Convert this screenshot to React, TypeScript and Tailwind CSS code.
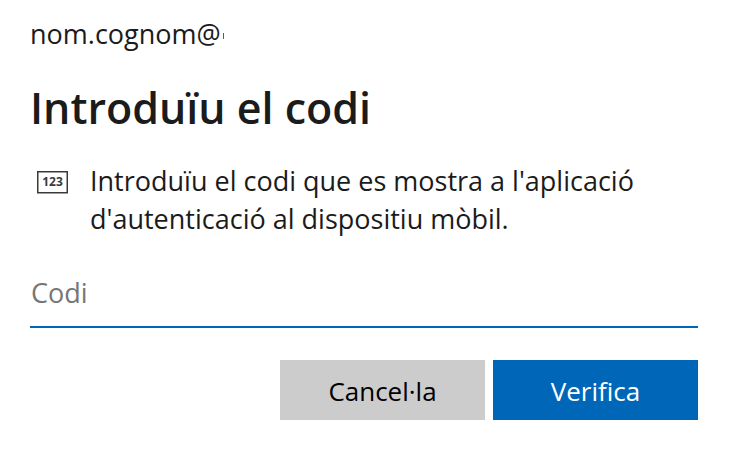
import { useState } from 'react';

function CodeIcon() {
  return (
    <svg className="h-6 w-8 shrink-0" viewBox="0 0 32 24" fill="none" aria-hidden="true">
      <rect x="1.75" y="1.75" width="29.5" height="21" stroke="#3a3a3a" strokeWidth="1.5" />
      <text x="16.5" y="16" textAnchor="middle" fontSize="12" fontWeight="700" fill="#3a3a3a" fontFamily="Open Sans, sans-serif">123</text>
    </svg>
  );
}

export default function App() {
  const [code, setCode] = useState('');

  return (
    <main className="min-h-screen bg-white pt-4 pr-12 pb-11 pl-[30px] font-['Open_Sans',sans-serif] text-[27px] leading-9 text-[#1b1b1b]">
      <div className="flex items-center gap-0.5">
        <span>nom.cognom@</span>
        {/* sliver left where the domain is cut off */}
        <span className="mt-1 h-1.5 w-px bg-[#5e5e5e]" aria-hidden="true" />
      </div>
      <h1 className="mt-7 text-[43px] leading-[56px] font-semibold">Introduïu el codi</h1>

      <form onSubmit={(e) => e.preventDefault()}>
        <div className="mt-[26px] flex gap-[22px] pl-1.5">
          <div className="pt-2">
            <CodeIcon />
          </div>
          <p className="max-w-[560px] leading-[38px]">
            Introduïu el codi que es mostra a l'aplicació d'autenticació al dispositiu mòbil.
          </p>
        </div>

        <input
          type="text"
          name="code"
          aria-label="Codi"
          placeholder="Codi"
          value={code}
          onChange={(e) => setCode(e.target.value)}
          className="mt-7 h-[62px] w-full border-b-2 border-[#0067b8] pb-2 pl-px outline-none placeholder:text-[#767676]"
        />

        <div className="mt-8 flex justify-end gap-2">
          <button type="button" className="h-[60px] w-[205px] bg-[#cccccc] pt-0.5 text-[26px] text-black">Cancel·la</button>
          <button type="submit" className="h-[60px] w-[205px] bg-[#0067b8] pt-0.5 text-[26px] text-white">Verifica</button>
        </div>
      </form>
    </main>
  );
}
